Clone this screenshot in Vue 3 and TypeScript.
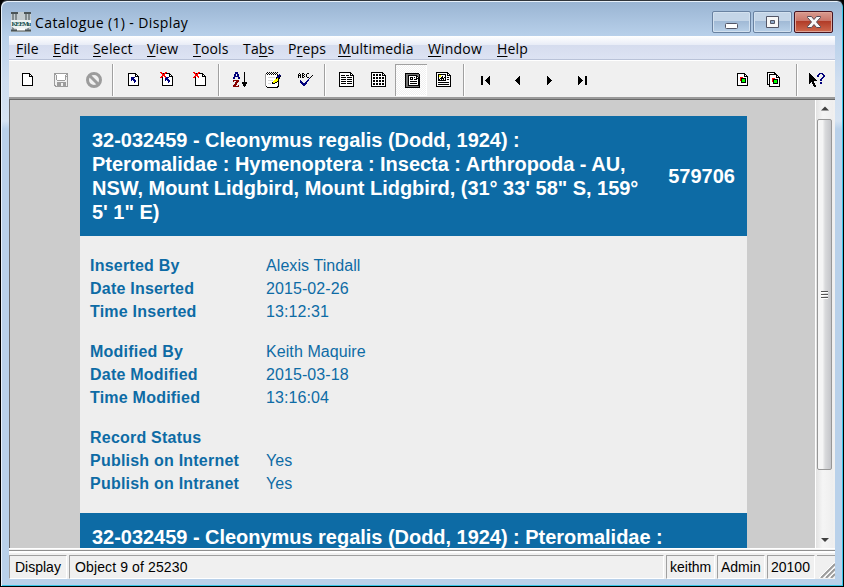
<script setup lang="ts">
interface Layer {
  x: number
  y: number
  rows: string[]
}
interface Tool {
  name: string
  layers: Layer[]
  pressed?: boolean
}

const palette: Record<string, string> = {
  '#': '#000000',
  '.': '#ffffff',
  g: '#9c9c9c',
  d: '#707070',
  l: '#d8d8d8',
  b: '#00007b',
  r: '#ff0000',
  m: '#840000',
  y: '#ffff00',
  G: '#00ff00',
}

function pixels(layer: Layer) {
  const out: { x: number; y: number; w: number; c: string }[] = []
  layer.rows.forEach((row, j) => {
    let i = 0
    while (i < row.length) {
      const ch = row[i]
      let n = 1
      while (row[i + n] === ch) n++
      if (palette[ch]) out.push({ x: layer.x + i, y: layer.y + j, w: n, c: palette[ch] })
      i += n
    }
  })
  return out
}

const page = [
  '########   ',
  '#......##  ',
  '#......#.# ',
  '#......####',
  '#.........#',
  '#.........#',
  '#.........#',
  '#.........#',
  '#.........#',
  '#.........#',
  '#.........#',
  '#.........#',
  '###########',
]
const arrow = ['bbbb ', 'bbb  ', 'bbbb ', 'b bbb', '   bb', '   b ']
const cross = ['rr   rr', ' rr rr ', '  rrr  ', '  rrr  ', ' rr rr ', 'rr   r ']

const fileTools: Tool[] = [
  { name: 'New', layers: [{ x: 10, y: 9, rows: page }] },
  {
    name: 'Save',
    layers: [{
      x: 9, y: 9, rows: [
        'gggggggggggggg',
        'gg..........gg',
        'g g........g g',
        'g g........ggg',
        'g g........g g',
        'g g........g g',
        'g g........g g',
        'g  gggggggg  g',
        'g            g',
        'g  ggggggggg g',
        'g  gggg  ggg g',
        'g  gggg  ggg g',
        'gg gggg  ggg g',
        ' ggggggggggggg',
      ],
    }],
  },
  { name: 'Cancel', layers: [] },
]
const recordTools: Tool[] = [
  { name: 'Undo', layers: [{ x: 11, y: 9, rows: page }, { x: 14, y: 13, rows: arrow }] },
  {
    name: 'Discard',
    layers: [{ x: 12, y: 9, rows: page }, { x: 15, y: 13, rows: arrow }, { x: 10, y: 8, rows: cross }],
  },
  { name: 'Remove', layers: [{ x: 12, y: 9, rows: page }, { x: 10, y: 8, rows: cross }] },
]
const editTools: Tool[] = [
  {
    name: 'Sort',
    layers: [
      { x: 10, y: 8, rows: ['  bbb  ', '  bbb  ', ' bb bb ', ' bb bb ', ' bbbbb ', 'bb   bb', 'bb   bb'] },
      { x: 10, y: 16, rows: ['mmmmmm', 'm  mmm', '  mmm ', '  mm  ', ' mmm  ', 'mmm  m', 'mmmmmm'] },
      {
        x: 19, y: 8,
        rows: ['  # ', '  # ', '  # ', '  # ', '  # ', '  # ', '  # ', '  # ', '  # ', '  # ', '#####', '#####', ' ### ', ' ### ', '  #  '],
      },
    ],
  },
  {
    name: 'Notes',
    layers: [{
      x: 9, y: 8, rows: [
        '  # # # # # #   ',
        ' # # # # # #    ',
        'g.#.#.#.#.#.# b ',
        'g...........#bbb',
        'g...........bbb#',
        'g..lllllll.#bb# ',
        'g..........#y## ',
        'g.........yyy#  ',
        'g..lllll.yyyy#  ',
        'g.......yyyy##  ',
        'g......#yy##.#  ',
        'g..lll.###...#  ',
        'g............#  ',
        'g............#  ',
        ' #..........##  ',
        '  ###########   ',
      ],
    }],
  },
  {
    name: 'Spelling',
    layers: [
      { x: 9, y: 9, rows: [' #  ##   ## ', '# # # # #   ', '### ##  #   ', '# # # # #   ', '# # ##   ## '] },
      { x: 11, y: 11, rows: ['            #', '           # ', '          #  ', '         b   ', '        b    ', 'b      bb    ', 'bb    bb     ', 'bbb  bb      ', ' bbbbbb      ', '  bbbb       ', '   bb        '] },
    ],
  },
]
const list = [
  '############   ',
  '#..........##  ',
  '#..........#.# ',
  '#.####.###.####',
  '#.............#',
  '#.#####.#####.#',
  '#.............#',
  '#.#####.#####.#',
  '#.............#',
  '#.#####.#####.#',
  '#.............#',
  '#.#####.#####.#',
  '#.............#',
  '#.............#',
  '###############',
]
const viewTools: Tool[] = [
  { name: 'List', layers: [{ x: 8, y: 8, rows: list }] },
  {
    name: 'Details',
    layers: [{
      x: 8, y: 8, rows: [
        '############   ',
        '#..........##  ',
        '#.##.##.##.#.# ',
        '#.##.##.##.####',
        '#.............#',
        '#.##.##.##.##.#',
        '#.##.##.##.##.#',
        '#.............#',
        '#.##.##.##.##.#',
        '#.##.##.##.##.#',
        '#.............#',
        '#.##.##.##.##.#',
        '#.##.##.##.##.#',
        '#.............#',
        '###############',
      ],
    }],
  },
  {
    name: 'Page',
    pressed: true,
    layers: [{
      x: 10, y: 9, rows: [
        '############## ',
        '#ddddddddddddd#',
        '#dd#########dd#',
        '#dd#.......##d#',
        '#dd#.###.#.#.##',
        '#dd#.#.#...####',
        '#dd#.###.###.##',
        '#dd#.........##',
        '#dd#.#######.##',
        '#dd#.........##',
        '#dd#.#######.##',
        '#dd#.........##',
        '#dd############',
        '#ddddddddddddd#',
        '###############',
      ],
    }],
  },
  {
    name: 'Contact Sheet',
    layers: [{
      x: 9, y: 8, rows: [
        '############   ',
        '#..........##  ',
        '#.########.#.# ',
        '#.#yy....#.####',
        '#.#yy.#..#....#',
        '#.#..##.##.##.#',
        '#.#.####.#....#',
        '#.##.#.#.#.##.#',
        '#.########....#',
        '#.............#',
        '#.###########.#',
        '#.............#',
        '#.###########.#',
        '#.............#',
        '###############',
      ],
    }],
  },
]
const left = ['    #', '   ##', '  ###', ' ####', '#####', ' ####', '  ###', '   ##', '    #']
const right = ['#    ', '##   ', '###  ', '#### ', '#####', '#### ', '###  ', '##   ', '#    ']
const bar = Array(9).fill('##') as string[]
const navTools: Tool[] = [
  { name: 'First', layers: [{ x: 12, y: 12, rows: bar }, { x: 16, y: 12, rows: left }] },
  { name: 'Previous', layers: [{ x: 14, y: 12, rows: left }] },
  { name: 'Next', layers: [{ x: 14, y: 12, rows: right }] },
  { name: 'Last', layers: [{ x: 13, y: 12, rows: right }, { x: 20, y: 12, rows: bar }] },
]
const chart = ['rrr   ', 'r#####', 'r#GGG#', 'r#GGG#', ' #GGG#', ' #####']
const reportTools: Tool[] = [
  { name: 'Report', layers: [{ x: 11, y: 9, rows: page }, { x: 14, y: 13, rows: chart }] },
  {
    name: 'Reports',
    layers: [{ x: 9, y: 8, rows: page }, { x: 11, y: 10, rows: page }, { x: 14, y: 14, rows: chart }],
  },
]
const helpTools: Tool[] = [
  {
    name: 'Context Help',
    layers: [
      {
        x: 8, y: 9,
        rows: ['#       ', '##      ', '###     ', '####    ', '#####   ', '######  ', '####### ', '########', '#####   ', '## ##   ', '#  ###  ', '    ##  ', '    ### ', '     ## '],
      },
      { x: 16, y: 9, rows: ['  bbbb  ', ' bb  bb ', 'bb    bb', 'bb    bb', '     bb ', '    bb  ', '   bb   ', '   bb   ', '        ', '   bb   ', '   bb   '] },
    ],
  },
]

const groups = [
  { id: 'file', tools: fileTools },
  { id: 'record', tools: recordTools },
  { id: 'edit', tools: editTools },
  { id: 'view', tools: viewTools },
  { id: 'nav', tools: navTools },
  { id: 'report', tools: reportTools },
  { id: 'help', tools: helpTools },
]

const menu = [
  ['', 'F', 'ile', 37],
  ['', 'E', 'dit', 40],
  ['', 'S', 'elect', 54],
  ['', 'V', 'iew', 46],
  ['', 'T', 'ools', 50],
  ['Ta', 'b', 's', 45],
  ['P', 'r', 'eps', 50],
  ['', 'M', 'ultimedia', 90],
  ['', 'W', 'indow', 69],
  ['', 'H', 'elp', 40],
] as [string, string, string, number][]

const sections = [
  [['Inserted By', 'Alexis Tindall'], ['Date Inserted', '2015-02-26'], ['Time Inserted', '13:12:31']],
  [['Modified By', 'Keith Maquire'], ['Date Modified', '2015-03-18'], ['Time Modified', '13:16:04']],
  [['Record Status', ''], ['Publish on Internet', 'Yes'], ['Publish on Intranet', 'Yes']],
]
</script>

<template>
  <div class="window">
    <header class="titlebar">
      <svg class="logo" width="20" height="20" viewBox="0 0 20 20">
        <rect width="20" height="20" fill="#c3ccd0" />
        <path d="M0 1h7M13 1h7M0 18.5h20" stroke="#4b5456" stroke-width="2" />
        <path d="M2 2v6M5 2v6M15 2v6M18 2v6M2 15v3M17 15v3" stroke="#6d7678" stroke-width="1.5" />
        <path d="M0 8h20v6q-3 3-6 3H6q-3 0-6-3z" fill="#eef3f2" />
        <path d="M6 17.5h8" stroke="#fff" stroke-width="2" />
        <text x="0.5" y="14">KE EMu</text>
      </svg>
      <h1>Catalogue (1) - Display</h1>
      <div class="controls">
        <button class="control" aria-label="Minimize">
          <svg width="37" height="20"><rect x="12.5" y="11.5" width="12" height="5" rx="1" fill="#fff" stroke="#535666" /></svg>
        </button>
        <button class="control" aria-label="Maximize">
          <svg width="37" height="20">
            <path d="M12.500 4.500h12v11h-12z" fill="#f7f7f7" stroke="#535666" />
            <path d="M16.500 8.500h4v3h-4z" fill="#8da8c7" stroke="#535666" />
          </svg>
        </button>
        <button class="control close" aria-label="Close">
          <svg width="37" height="20">
            <path d="M12.500 4.500h4l2.500 3 2.500-3h4v1l-4 4.500 4 4.500v1h-4l-2.500-3-2.500 3h-4v-1l4-4.500-4-4.500z" fill="#f8f8f8" stroke="#554a55" />
          </svg>
        </button>
      </div>
    </header>

    <div class="client">
      <nav class="menu">
        <span v-for="m in menu" :key="m[2]" class="menu-item" :style="{ width: m[3] + 'px' }">{{ m[0] }}<u>{{ m[1] }}</u>{{ m[2] }}</span>
      </nav>

      <div class="toolbar">
        <div v-for="g in groups" :key="g.id" class="group" :class="g.id">
          <button v-for="t in g.tools" :key="t.name" class="tool" :class="{ pressed: t.pressed }" :aria-label="t.name">
            <svg width="32" height="32" viewBox="0 0 32 32">
              <g v-if="t.name === 'Cancel'" fill="none" stroke="#9c9c9c" stroke-width="3">
                <circle cx="16" cy="16" r="6.500" />
                <path d="M11.500 11.500l9 9" />
              </g>
              <g v-for="(layer, i) in t.layers" :key="i" shape-rendering="crispEdges">
                <rect v-for="(p, k) in pixels(layer)" :key="k" :x="p.x" :y="p.y" :width="p.w" height="1" :fill="p.c" />
              </g>
            </svg>
          </button>
        </div>
      </div>

      <main class="viewport">
        <div class="document">
          <div class="banner">
            <h2>32-032459 - Cleonymus regalis (Dodd, 1924) : Pteromalidae : Hymenoptera : Insecta : Arthropoda - AU, NSW, Mount Lidgbird, Mount Lidgbird, (31° 33' 58" S, 159° 5' 1" E)</h2>
            <strong>579706</strong>
          </div>
          <div class="details">
            <dl v-for="(s, i) in sections" :key="i">
              <template v-for="row in s" :key="row[0]">
                <dt>{{ row[0] }}</dt>
                <dd>{{ row[1] }}</dd>
              </template>
            </dl>
          </div>
          <div class="banner next-record">
            <h2>32-032459 - Cleonymus regalis (Dodd, 1924) : Pteromalidae :</h2>
          </div>
        </div>
        <div class="scrollbar">
          <svg class="arrow" width="17" height="17"><path d="M5 10.500l4-4 4 4z" fill="#404040" /></svg>
          <div class="thumb"><i /><i /><i /></div>
          <svg class="arrow" width="17" height="17"><path d="M5 7h8l-4 4z" fill="#404040" /></svg>
        </div>
      </main>

      <footer class="status">
        <span class="cell mode">Display</span>
        <span class="cell grow">Object 9 of 25230</span>
        <span class="cell user">keithm</span>
        <span class="cell role">Admin</span>
        <span class="cell port">20100</span>
        <span class="grip">
          <svg width="18" height="22">
            <path d="M4 22L18 8M9 22l9-9M14 22l4-4" stroke="#9b9b9b" stroke-width="2" />
            <path d="M2 22L18 6M7 22l11-11M12 22l6-6" stroke="#fff" />
          </svg>
        </span>
      </footer>
    </div>
  </div>
</template>

<style>
body {
  background: #000;
  overflow: hidden;
}
</style>

<style scoped>
* {
  box-sizing: border-box;
}
.window {
  width: 844px;
  height: 587px;
  border: 1px solid #000;
  border-top-color: #30353b;
  border-radius: 7px 7px 0 0;
  padding: 0 8px 7px 7px;
  background: linear-gradient(#99b4d2 0, #b8d0ea 35px, #cfdef0 80px, #d5e3f2 120px, #b9d1ea 128px, #b9d1ea 100%);
  box-shadow: inset 1px 1px 0 #e8f1fa, inset -1px -1px 0 #37c6e8;
  font-family: 'Open Sans', 'Noto Sans', sans-serif;
  color: #000;
}
.titlebar {
  height: 35px;
  display: flex;
  align-items: center;
  padding: 7px 2px 0 3px;
}
.logo text {
  font: bold 6.5px 'Liberation Serif', serif;
  letter-spacing: -1.1px;
  fill: #0b4a48;
}
.titlebar h1 {
  margin: 0 0 0 4px;
  font-size: 14px;
  font-weight: 400;
  letter-spacing: 0.39px;
  flex: 1;
}
.controls {
  display: flex;
  gap: 2px;
  margin: -1px 0 0;
}
.control {
  width: 39px;
  height: 22px;
  padding: 0;
  border: 1px solid #6982a1;
  border-radius: 2px;
  background: linear-gradient(#c4d5e7 0 45%, #a0b9d5 45%, #b8d0e8);
  box-shadow: inset 0 0 0 1px #d3e1ef;
}
.control svg {
  display: block;
}
.close {
  border-color: #471421;
  background: linear-gradient(#d99b8f 0, #c97568 45%, #b03a26 45%, #cf6a4e);
  box-shadow: inset 0 0 0 1px #dfa598;
}
.client {
  margin-left: 1px;
  width: 826px;
  height: 543px;
  display: flex;
  flex-direction: column;
  background: #f0f0f0;
}
.menu {
  height: 24px;
  flex: none;
  display: flex;
  padding-left: 7px;
  background: linear-gradient(#fff 0, #e9edf7 37%, #d5dcee 38%, #dde3f3 100%);
  font-size: 14px;
  line-height: 25px;
  letter-spacing: 0.18px;
  border-bottom: 1px solid #b9c2d8;
}
.menu-item {
  flex: none;
  white-space: nowrap;
}
.menu u {
  text-underline-offset: 2px;
  text-decoration-thickness: 1px;
}
.toolbar {
  height: 39px;
  flex: none;
  display: flex;
  padding: 3px 0 0 3px;
  border-top: 1px solid #fff;
  border-bottom: 2px solid #9a9a9a;
}
.group {
  display: flex;
  height: 32px;
}
.group + .group {
  border-left: 1px solid #a0a0a0;
  box-shadow: inset 1px 0 0 #fff;
  margin-left: 1px;
  padding-left: 4px;
}
.tool {
  width: 33px;
  height: 32px;
  padding: 0;
  border: 0;
  background: none;
}
.tool svg {
  display: block;
}
.view .tool,
.nav .tool,
.report .tool {
  width: 32px;
}
.toolbar .edit {
  margin-left: 2px;
}
.toolbar .view {
  margin-left: 2px;
  padding-left: 6px;
}
.toolbar .nav {
  margin-left: 4px;
  padding-left: 5px;
}
.toolbar .report {
  margin-left: auto;
  border-left: 0;
  box-shadow: none;
}
.toolbar .help {
  margin-left: 6px;
  margin-right: 1px;
}
.tool.pressed {
  box-shadow: inset 1px 1px 0 #a0a0a0, inset -1px -1px 0 #fff;
  background: repeating-conic-gradient(#fff 0 25%, #f0f0f0 0 50%) 0 0 / 2px 2px;
}
.viewport {
  flex: 1;
  min-height: 0;
  display: flex;
  justify-content: space-between;
  overflow: hidden;
  border: solid #696969;
  border-width: 1px 0 0 1px;
  padding-right: 2px;
  background: #ccc;
  box-shadow: inset -2px 0 0 #f0f0f0;
}
.document {
  width: 667px;
  margin: 16px 0 0 70px;
  font-family: 'Liberation Sans', Arial, sans-serif;
  color: #0d6ba5;
  background: #eee;
}
.banner {
  height: 120px;
  display: flex;
  align-items: center;
  justify-content: space-between;
  padding: 0 12px;
  background: #0d6ba5;
  color: #fff;
  font-size: 20px;
  line-height: 24px;
}
.banner h2 {
  width: 554px;
  margin: 0;
  font-size: 20px;
  font-weight: 700;
  letter-spacing: -0.03px;
}
.banner.next-record {
  align-items: flex-start;
  padding-top: 12px;
}
.next-record h2 {
  width: 640px;
}
.details {
  height: 277px;
  padding: 18px 10px 0;
}
dl {
  margin: 0 0 17px;
  display: grid;
  grid-template-columns: 176px 1fr;
  grid-auto-rows: 23px;
  font-size: 16px;
  line-height: 23px;
}
dt {
  font-weight: 700;
  letter-spacing: 0.22px;
}
dd {
  margin: 0;
  letter-spacing: 0.08px;
}
.scrollbar {
  width: 17px;
  flex: none;
  display: flex;
  flex-direction: column;
  background: linear-gradient(90deg, #e3e3e3, #f5f5f5 40%, #eee);
  box-shadow: -1px 0 0 #fff;
}
.arrow {
  flex: none;
}
.thumb {
  width: 15px;
  height: 351px;
  margin: 2px 0 auto 1px;
  border: 1px solid #979797;
  border-radius: 2px;
  background: linear-gradient(90deg, #f5f5f5 0 35%, #d9dadc 55%, #c4c5c9);
  display: flex;
  flex-direction: column;
  align-items: center;
  justify-content: center;
  gap: 1px;
}
.thumb i {
  width: 7px;
  height: 2px;
  background: linear-gradient(#555 50%, #fff 50%);
}
.status {
  flex: none;
  height: 31px;
  display: flex;
  gap: 2px;
  padding-top: 7px;
  font: 14px/23px 'Liberation Sans', Arial, sans-serif;
  background: linear-gradient(#fff 0 1px, #f0f0f0 1px 2px, #8f8f8f 2px 3px, #fff 3px 5px, #f0f0f0 5px);
}
.cell {
  border: 1px solid #a0a0a0;
  border-right-color: #fff;
  border-bottom-color: #fff;
  padding-left: 5px;
  white-space: nowrap;
}
.mode {
  width: 58px;
}
.grow {
  flex: 1;
  letter-spacing: 0.12px;
}
.user {
  width: 49px;
  padding-left: 3px;
}
.role {
  width: 48px;
  padding-left: 3px;
}
.port {
  width: 48px;
  padding-left: 3px;
}
.grip {
  width: 18px;
  border-top: 1px solid #a0a0a0;
}
.grip svg {
  display: block;
}
</style>
